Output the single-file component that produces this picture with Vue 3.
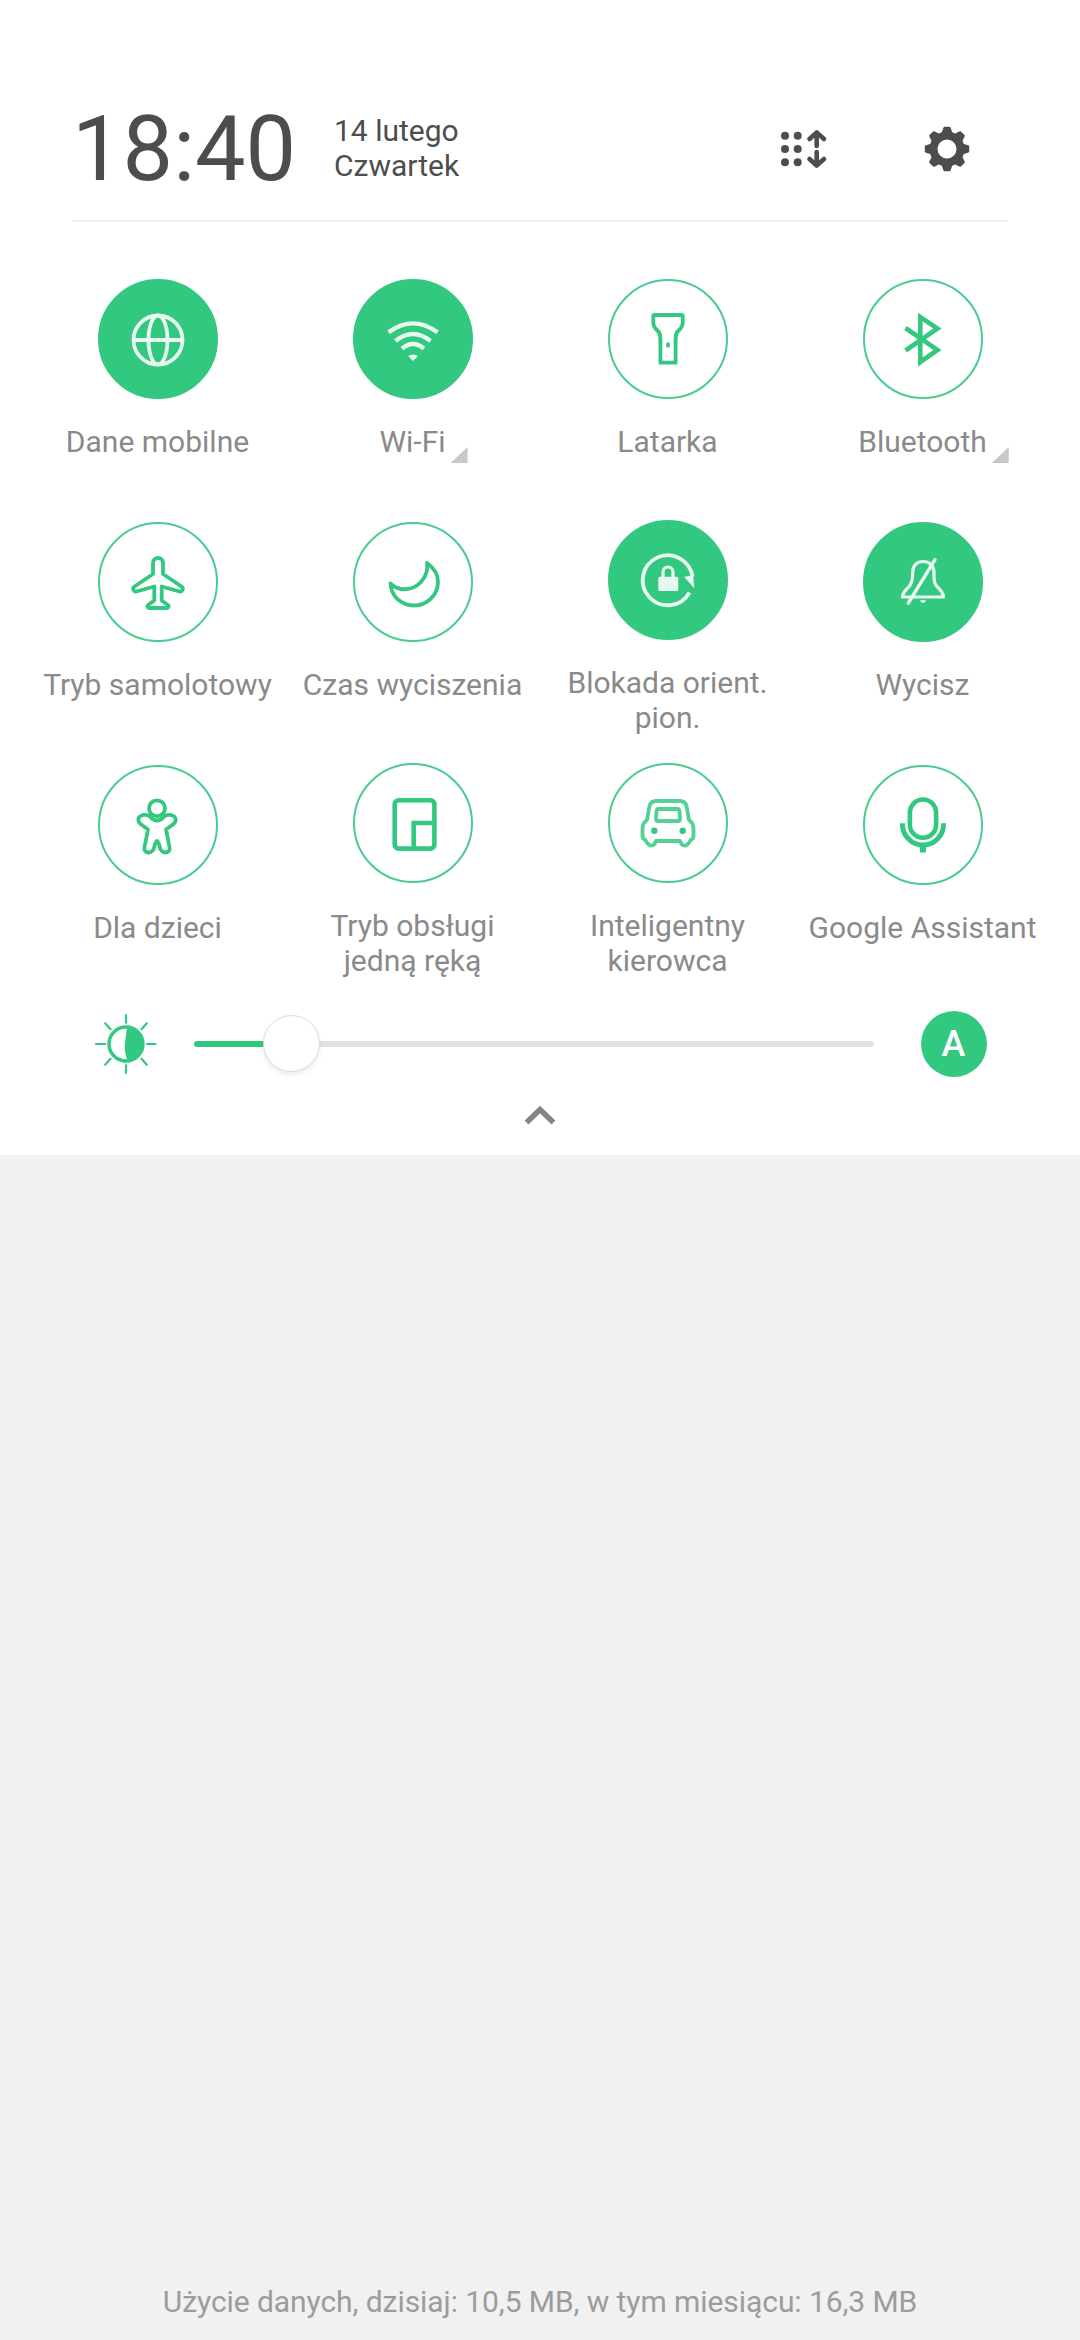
<script setup>
const tiles = [
  { key: 'globe', label: 'Dane mobilne', on: true },
  { key: 'wifi', label: 'Wi-Fi', on: true, more: true },
  { key: 'torch', label: 'Latarka' },
  { key: 'bt', label: 'Bluetooth', more: true },
  { key: 'plane', label: 'Tryb samolotowy' },
  { key: 'moon', label: 'Czas wyciszenia' },
  { key: 'lock', label: 'Blokada orient. pion.', on: true, two: true },
  { key: 'bell', label: 'Wycisz', on: true },
  { key: 'kid', label: 'Dla dzieci' },
  { key: 'hand', label: 'Tryb obsługi jedną ręką', two: true },
  { key: 'car', label: 'Inteligentny kierowca', two: true },
  { key: 'mic', label: 'Google Assistant' }
]

// Eight-toothed gear outline around (25, 25), with a round hole.
const polar = (r, a) => `${(25 + r * Math.sin(a)).toFixed(2)} ${(25 - r * Math.cos(a)).toFixed(2)}`
const gearPath = (() => {
  const pts = []
  for (let i = 0; i < 8; i++) {
    const a = (i * Math.PI) / 4
    pts.push(polar(16.6, a - 0.27), polar(21.4, a - 0.12), polar(21.4, a + 0.12), polar(16.6, a + 0.27))
  }
  return `M${pts.join('L')}Z M25 14.5A10.5 10.5 0 1 0 25 35.5A10.5 10.5 0 1 0 25 14.5Z`
})()
</script>

<template>
  <div class="page">
    <section class="panel">
      <header class="head">
        <div class="clock">18:40</div>
        <div class="date"><div>14 lutego</div><div>Czwartek</div></div>
        <svg class="sort" viewBox="0 0 50 44" width="50" height="44">
          <g fill="#4d4d4d">
            <circle cx="4" cy="8.7" r="4" /><circle cx="16.7" cy="8.7" r="4" />
            <circle cx="4" cy="22" r="4" /><circle cx="16.7" cy="22" r="4" />
            <circle cx="4" cy="35.3" r="4" /><circle cx="16.7" cy="35.3" r="4" />
          </g>
          <path d="M35.7 19V6M28.5 12L35.7 5.5L43 12M35.7 25V38M28.5 32L35.7 38.5L43 32" fill="none" stroke="#4d4d4d" stroke-width="4.6" stroke-linecap="round" stroke-linejoin="round" />
        </svg>
        <svg class="gear" viewBox="0 0 50 50" width="50" height="50">
          <path :d="gearPath" fill="#4d4d4d" fill-rule="evenodd" stroke="#4d4d4d" stroke-width="2" stroke-linejoin="round" />
        </svg>
      </header>

      <div class="grid">
        <div v-for="t in tiles" :key="t.key" class="tile" :class="{ two: t.two }">
          <div class="disc" :class="{ on: t.on }">
            <svg viewBox="0 0 120 120" width="120" height="120" class="glyph">
              <g v-if="t.key === 'globe'">
                <circle cx="60" cy="61" r="24.5" /><ellipse cx="60" cy="61" rx="9.5" ry="24.5" /><path d="M36 61H84" />
              </g>
              <g v-else-if="t.key === 'wifi'" class="wide">
                <path d="M35.5 53.3Q60 35.3 84.5 53.3" /><path d="M42.5 62Q60 48 77.5 62" /><path d="M49 69.7Q60 60.3 71 69.7" />
                <path class="solid" d="M55 77Q60 74 65 77L60 82Z" />
              </g>
              <path v-else-if="t.key === 'torch'" d="M46.5 36H73.5Q74.7 36 74.7 37.2V43Q74.7 48 71 51Q67.6 54 67.6 59V83.7H52.4V59Q52.4 54 49 51Q45.3 48 45.3 43V37.2Q45.3 36 46.5 36Z" />
              <path v-else-if="t.key === 'bt'" class="thick" d="M42.5 49L74.5 71L57.3 83V38L74.5 49.5L42.5 71.5" />
              <path v-else-if="t.key === 'plane'" d="M55 41A5 5 0 0 1 65 41V52L83.5 64.5Q85.5 66 84.5 68Q83.5 70 81.5 69.5L63.7 64.5V78.5L70 83Q71 84 70.5 85Q70 86 69 86H51Q50 86 49.5 85Q49 84 50 83L56.3 78.5V64.5L38.5 69.5Q36.5 70 35.5 68Q34.5 66 36.5 64.5L55 52Z" />
              <path v-else-if="t.key === 'moon'" d="M37.5 61.5C41 65.5 48 68 54 67C65 66 76 55 74 41C81 46 85 53 85 60C85 73 74 83.5 61 83.5C48 83.5 38 74 37.5 61.5Z" />
              <g v-else-if="t.key === 'lock'">
                <path d="M81.5 72.5A25 25 0 1 1 84.5 57" />
                <path class="solid" d="M76 56.7L85 55.5L86.3 68.3Z" />
                <rect class="solid" x="50.3" y="56.7" width="20" height="14.3" rx="1.5" />
                <path class="thin" d="M55 57V52A5 5 0 0 1 65 52V57" />
              </g>
              <g v-else-if="t.key === 'bell'">
                <path class="thin" d="M39.5 75H80.5C80.5 70 76 67 73.5 64C71 61 71 58 71 50C71 43.5 66 39.5 60 39.5C54 39.5 49.7 43.5 49.7 50C49.7 58 49 61 46.5 64C44 67 39.5 70 39.5 75Z" />
                <path class="cap" d="M72 37.7L45.3 81" />
                <path class="solid" d="M57 78.3H63.2Q62.5 81 60 81Q57.7 81 57 78.3Z" />
              </g>
              <g v-else-if="t.key === 'kid'">
                <circle cx="59" cy="43.3" r="8" />
                <path d="M52 51.5Q55 55.5 59 55.5Q63 55.5 66 51.5Q68.5 49.5 73 50Q77.5 51 77.7 55Q77.5 57.5 75.5 59L68 64.5L71.5 82Q72.5 87 67.5 87.5Q63.5 87.5 62 83Q60.5 76 59 76Q57.5 76 56 83Q54.5 87.5 50.5 87.5Q45.5 87 46.5 82L50 64.5L42.5 59Q40.5 57.5 40.3 55Q40.5 51 45 50Q49.5 49.5 52 51.5Z" />
              </g>
              <g v-else-if="t.key === 'hand'" class="thick">
                <rect x="41.7" y="37.3" width="39.7" height="48.3" rx="4" /><path d="M60.7 85.5V60H81" />
              </g>
              <g v-else-if="t.key === 'car'" class="soft">
                <path d="M48 38H72Q77 38 78.5 43L81 57Q85.5 60 85.5 66V73Q85.5 76 82.5 77L81.5 79Q79 83 76 82.5Q73.5 82 72 78H48Q46.5 82 44 82.5Q41 83 38.5 79L37.5 77Q34.5 76 34.5 73V66Q34.5 60 39 57L41.5 43Q43 38 48 38Z" />
                <path d="M50.5 46H69.5Q71 46 71.5 48L72 56Q72 58 70 58H50Q48 58 48 56L48.5 48Q49 46 50.5 46Z" />
                <circle class="solid" cx="46.3" cy="67.7" r="3.2" /><circle class="solid" cx="74.7" cy="67.7" r="3.2" />
              </g>
              <g v-else-if="t.key === 'mic'">
                <rect class="thick" x="46.9" y="34.5" width="26.2" height="38.3" rx="13.1" />
                <path class="arc" d="M39.5 58.3V59.5A20.5 20.5 0 0 0 80.5 59.5V58.3" />
                <rect class="solid" x="57" y="80" width="6" height="7.5" />
              </g>
              <ellipse v-if="t.key === 'torch'" class="solid" cx="60" cy="66" rx="1.9" ry="2.8" />
            </svg>
          </div>
          <div class="label"><span class="text">{{ t.label }}<i v-if="t.more" class="more"></i></span></div>
        </div>
      </div>

      <div class="bright">
        <svg class="sun" viewBox="0 0 64 64" width="64" height="64">
          <circle cx="32" cy="32" r="17" fill="none" stroke="#33c880" stroke-width="3.4" />
          <path d="M33 16.5A15.5 15.5 0 0 1 33 47.5Q30 39 31 32Q31.5 24 33 16.5Z" fill="#33c880" />
          <path d="M32 3V10.7M32 53.3V61M2 32H11.2M53 32H61.5M11.2 11.3L16.5 17.3M52.8 11.3L47.5 17.3M11.2 52.7L16.5 46.7M52.8 52.7L47.5 46.7" stroke="#33c880" stroke-width="2.2" stroke-linecap="round" />
        </svg>
        <div class="track"><div class="fill"></div><div class="thumb"></div></div>
        <div class="auto">A</div>
      </div>

      <div class="chev">
        <svg viewBox="0 0 34 22" width="34" height="22"><path d="M3.5 18.5L17 5.5L30.5 18.5" fill="none" stroke="#868686" stroke-width="5.5" /></svg>
      </div>
    </section>

    <footer class="foot">Użycie danych, dzisiaj: 10,5 MB, w tym miesiącu: 16,3 MB</footer>
  </div>
</template>

<style scoped>
.page {
  width: 1080px;
  height: 2340px;
  background: #f1f1f1;
  display: flex;
  flex-direction: column;
  font-family: Roboto, "Noto Sans", sans-serif;
  overflow: hidden;
}
.panel {
  height: 1155px;
  background: #fff;
  display: flex;
  flex-direction: column;
}
.head {
  margin: 0 72px;
  height: 222px;
  box-sizing: border-box;
  padding-top: 76px;
  border-bottom: 2px solid #f2f2f2;
  display: flex;
  align-items: center;
  color: #4d4d4d;
}
.clock {
  font-size: 90px;
  font-weight: 400;
  line-height: 107px;
  width: 262px;
  flex: none;
  padding-top: 2px;
}
.date {
  font-size: 30px;
  line-height: 35px;
  width: 447px;
  flex: none;
}
.sort { flex: none; margin-top: 2px; }
.gear { margin-left: 91px; margin-top: 2px; flex: none; }
.grid {
  margin-top: 57px;
  padding: 0 30px;
  display: grid;
  grid-template-columns: repeat(4, 255px);
  grid-auto-rows: 243px;
}
.tile {
  display: flex;
  flex-direction: column;
  align-items: center;
}
.tile.two { margin-top: -2px; }
.disc {
  width: 120px;
  height: 120px;
  box-sizing: border-box;
  border-radius: 50%;
  border: 2px solid #48cd8e;
  color: #33c880;
  flex: none;
  display: flex;
  align-items: center;
  justify-content: center;
}
.disc.on {
  background: #33c880;
  border-color: #33c880;
  color: #e6f8ef;
}
.glyph {
  flex: none;
  fill: none;
  stroke: currentColor;
  stroke-width: 3.8;
  stroke-linejoin: round;
}
.glyph .solid { fill: currentColor; stroke: none; }
.glyph .thin { stroke-width: 3.2; }
.glyph .cap { stroke-linecap: round; stroke-width: 3.4; }
.glyph .wide { stroke-width: 4.2; }
.glyph .thick { stroke-width: 4.6; stroke-linejoin: miter; }
.glyph .arc { stroke-width: 5; stroke-linejoin: miter; }
.glyph .soft { stroke: #55d196; }
.glyph .soft .solid { fill: #33c880; stroke: none; }
.label {
  margin-top: 25px;
  font-size: 30px;
  line-height: 35px;
  color: #8a8a8a;
  text-align: center;
  width: 236px;
}
.text { position: relative; }
.more {
  position: absolute;
  left: 100%;
  margin-left: 5px;
  bottom: -4px;
  width: 17px;
  height: 16px;
  background: #c8c8c8;
  clip-path: polygon(100% 0, 100% 100%, 0 100%);
}
.bright {
  margin-top: 3px;
  padding: 0 93px 0 94px;
  height: 66px;
  display: flex;
  align-items: center;
}
.sun { flex: none; margin-right: 35.5px; }
.track {
  position: relative;
  width: 680px;
  height: 6px;
  border-radius: 3px;
  background: #e3e3e3;
}
.fill {
  width: 70px;
  height: 100%;
  border-radius: 3px 0 0 3px;
  background: #33c880;
}
.thumb {
  position: absolute;
  left: 69px;
  top: -26px;
  width: 57px;
  height: 57px;
  box-sizing: border-box;
  border-radius: 50%;
  background: #fff;
  border: 1px solid #dcdcdc;
  box-shadow: 0 3px 5px rgba(0, 0, 0, 0.08);
}
.auto {
  margin-left: 47px;
  width: 66px;
  height: 66px;
  flex: none;
  border-radius: 50%;
  background: #33c880;
  color: #fff;
  font-size: 36px;
  font-weight: 500;
  display: flex;
  align-items: center;
  justify-content: center;
}
.chev {
  margin-top: 27px;
  height: 22px;
  display: flex;
  justify-content: center;
}
.foot {
  margin-top: auto;
  padding-bottom: 21px;
  font-size: 30px;
  line-height: 35px;
  letter-spacing: -0.07px;
  color: #9c9c9c;
  text-align: center;
}
</style>
